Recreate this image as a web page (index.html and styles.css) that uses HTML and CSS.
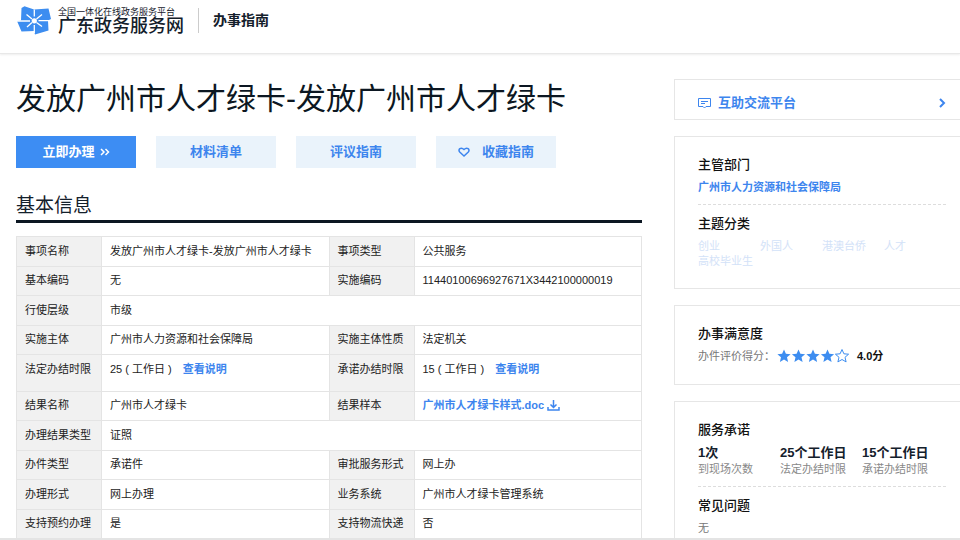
FILE: index.html
```html
<!DOCTYPE html>
<html lang="zh-CN">
<head>
<meta charset="utf-8">
<title>办事指南</title>
<link rel="stylesheet" href="styles.css">
</head>
<body>
<div class="page">
  <header class="topbar">
    <svg class="logo" viewBox="0 0 36 30" aria-hidden="true">
      <path fill="#3d8df0" d="M5.500 2 8.500 .3 18 3.500 32.500 2.500 35 13 32 14.500 32.500 24.500 19 28.500 18 25 5.500 25.500 1 15 5 14.500z"/>
      <path stroke="#fff" stroke-width="1.300" fill="none" d="M18.300 3.500V10.500M18.300 19V27M1 15H14M22.500 14.700H34M10.500 8.500 16 13M26 8.500 20.500 13M26 20.500 20.500 16.500M11 21 16 16.500"/>
      <circle cx="18.300" cy="14.800" r="2.600" fill="#fff"/>
    </svg>
    <div class="brand">
      <span class="brand-sub">全国一体化在线政务服务平台</span>
      <span class="brand-name">广东政务服务网</span>
    </div>
    <span class="section-name">办事指南</span>
  </header>
  <div class="content">
    <main>
      <h1>发放广州市人才绿卡-发放广州市人才绿卡</h1>
      <div class="actions">
        <button class="btn primary" type="button">立即办理
          <svg class="chevrons" viewBox="0 0 10 8" aria-hidden="true"><path d="M1 1l3 3-3 3M5.500 1l3 3-3 3"/></svg>
        </button>
        <button class="btn" type="button">材料清单</button>
        <button class="btn" type="button">评议指南</button>
        <button class="btn favorite" type="button">
          <svg class="heart" viewBox="0 0 12 10" aria-hidden="true"><path d="M6 9 1.700 5C-.5 2.500 3 -.5 6 2.500 9 -.5 12.500 2.500 10.300 5z"/></svg>
          收藏指南</button>
      </div>
      <h2>基本信息</h2>
      <table class="info">
        <colgroup><col class="c-label"><col class="c-value"><col class="c-label"><col class="c-value"></colgroup>
        <tbody>
        <tr><th scope="row">事项名称</th><td>发放广州市人才绿卡-发放广州市人才绿卡</td><th scope="row">事项类型</th><td>公共服务</td></tr>
        <tr><th scope="row">基本编码</th><td>无</td><th scope="row">实施编码</th><td>11440100696927671X3442100000019</td></tr>
        <tr><th scope="row">行使层级</th><td colspan="3">市级</td></tr>
        <tr><th scope="row">实施主体</th><td>广州市人力资源和社会保障局</td><th scope="row">实施主体性质</th><td>法定机关</td></tr>
        <tr class="tall"><th scope="row">法定办结时限</th><td>25 ( 工作日 ) <a class="explain" href="#">查看说明</a></td><th scope="row">承诺办结时限</th><td>15 ( 工作日 ) <a class="explain" href="#">查看说明</a></td></tr>
        <tr><th scope="row">结果名称</th><td>广州市人才绿卡</td><th scope="row">结果样本</th><td><a href="#">广州市人才绿卡样式.doc <svg class="download" viewBox="0 0 13 11" aria-hidden="true"><path d="M6.500 0V7M3.500 4.500l3 3 3-3M1 7v3h11V7"/></svg></a></td></tr>
        <tr><th scope="row">办理结果类型</th><td colspan="3">证照</td></tr>
        <tr><th scope="row">办件类型</th><td>承诺件</td><th scope="row">审批服务形式</th><td>网上办</td></tr>
        <tr><th scope="row">办理形式</th><td>网上办理</td><th scope="row">业务系统</th><td>广州市人才绿卡管理系统</td></tr>
        <tr><th scope="row">支持预约办理</th><td>是</td><th scope="row">支持物流快递</th><td>否</td></tr>
        </tbody>
      </table>
    </main>
    <aside>
      <a class="card forum" href="#">
        <svg class="chat" viewBox="0 0 13 11" aria-hidden="true"><path d="M.5.500h12v8H8L6.500 10 5 8.500H.5zM3 3.500h7M3 5.500h4"/></svg>
        <span>互助交流平台</span>
        <svg class="arrow" viewBox="0 0 8 10" aria-hidden="true"><path d="M2 1l4 4-4 4"/></svg>
      </a>
      <section class="card">
        <h3>主管部门</h3>
        <a class="dept" href="#">广州市人力资源和社会保障局</a>
        <hr>
        <h3>主题分类</h3>
        <ul class="tags"><li>创业</li><li>外国人</li><li>港澳台侨</li><li>人才</li><li>高校毕业生</li></ul>
      </section>
      <section class="card rating">
        <h3>办事满意度</h3>
        <p class="score"><span>办件评价得分：</span>
          <svg class="stars" viewBox="0 0 72 14" role="img" aria-label="4.0">
            <defs><path id="star" d="M7 .5 8.900 4.800 13.600 5.200 10 8.300 11.100 12.900 7 10.500 2.900 12.900 4 8.300.4 5.200 5.100 4.800z"/></defs>
            <g fill="#3d8df0"><use href="#star"/><use href="#star" x="14.500"/><use href="#star" x="29"/><use href="#star" x="43.500"/></g>
            <use href="#star" x="58" fill="#fff" stroke="#3d8df0"/>
          </svg>
          <strong>4.0分</strong></p>
      </section>
      <section class="card">
        <h3>服务承诺</h3>
        <dl class="promises">
          <div><dd>1次</dd><dt>到现场次数</dt></div>
          <div><dd>25个工作日</dd><dt>法定办结时限</dt></div>
          <div><dd>15个工作日</dd><dt>承诺办结时限</dt></div>
        </dl>
        <hr>
        <h3>常见问题</h3>
        <p class="muted">无</p>
      </section>
    </aside>
  </div>
</div>
</body>
</html>
```
FILE: styles.css
```css
* { box-sizing: border-box; }
body, h1, h2, h3, p, ul, dl, dd { margin: 0; padding: 0; }
body {
  background: #fff;
  color: #222;
  font: 11px/16px "Liberation Sans", "Noto Sans CJK SC", sans-serif;
}
a { color: #3d85ee; font-weight: 700; text-decoration: none; }
svg { fill: none; stroke: currentColor; flex: none; }

.page {
  display: flex;
  flex-direction: column;
  height: 100vh;
  overflow: hidden;
  border-bottom: 2px solid #e4e4e4;
}

.topbar {
  display: flex;
  flex: none;
  align-items: flex-start;
  height: 54px;
  padding: 6px 16px 0;
  border-bottom: 1px solid #e8e8e8;
  box-shadow: 0 1px 2px #eee;
}
.logo { width: 36px; height: 30px; stroke: none; }
.brand { display: flex; flex-direction: column; margin-left: 6px; color: #14202b; }
.brand-sub { font-size: 9px; line-height: 13px; }
.brand-name { font-size: 18px; font-weight: 500; line-height: 15px; }
.section-name {
  margin: 2px 0 0 14px;
  padding-left: 14px;
  border-left: 1px solid #ccc;
  color: #14202b;
  font-size: 14px;
  font-weight: 700;
  line-height: 25px;
}

.content {
  display: grid;
  grid-template-columns: minmax(0, 1fr) 286px;
  gap: 32px;
  padding: 25px 0 0 16px;
}
h1 { color: #0c1722; font-size: 30px; font-weight: 400; line-height: 40px; }

.actions { display: grid; grid-template-columns: repeat(4, 120px); gap: 20px; margin-top: 17px; }
.btn {
  display: flex;
  align-items: center;
  justify-content: center;
  gap: 5px;
  height: 32px;
  padding: 0;
  border: 0;
  background: #eaf3fb;
  color: #3d85ee;
  font: inherit;
  font-size: 13px;
  font-weight: 700;
}
.btn.primary { background: #3d8df3; color: #fff; }
.btn.favorite { gap: 12px; }
.chevrons { width: 10px; height: 8px; stroke-width: 1.5; }
.heart { width: 12px; height: 10px; stroke-width: 1.5; }

h2 {
  margin-top: 23px;
  border-bottom: 3px solid #0c1722;
  color: #14202b;
  font-size: 19px;
  font-weight: 400;
  line-height: 29px;
}

.info { width: 100%; margin-top: 13px; border-collapse: collapse; table-layout: fixed; }
.c-label { width: 85px; }
.info tr { height: 30px; }
.info tr:nth-child(even) { height: 29px; }
.info .tall { height: 37px; }
.info th, .info td { padding: 0 8px 2px; border: 1px solid #e4e4e4; text-align: left; white-space: nowrap; }
.info th { background: #f1f1f1; font-weight: 400; }
.info .tall th, .info .tall td { padding-bottom: 8px; }
.explain { margin-left: 8px; }
.download { width: 13px; height: 11px; stroke-width: 1.5; vertical-align: -2px; }

aside { display: flex; flex-direction: column; gap: 16px; }
.card { display: block; padding: 18px 14px 19px 23px; border: 1px solid #e6e6e6; border-right: 0; }
.card.forum { display: flex; align-items: center; gap: 7px; padding: 11px 14px 4px 23px; font-size: 13px; line-height: 24px; }
.card.rating { padding-bottom: 20px; }
.chat { width: 13px; height: 11px; }
.arrow { width: 8px; height: 10px; margin-left: auto; stroke-width: 2; }
h3 { color: #111; font-size: 13px; font-weight: 500; line-height: 20px; }
.dept { display: block; margin-top: 4px; }
hr { margin: 9px 0; border: 0; border-top: 1px dashed #ddd; }
.tags {
  display: grid;
  grid-template-columns: repeat(4, 62px);
  margin-top: 5px;
  color: #d3e2f8;
  line-height: 15px;
  list-style: none;
  white-space: nowrap;
}
.score { display: flex; align-items: center; margin-top: 4px; color: #777; }
.stars { width: 72px; height: 14px; stroke: none; margin-left: 2px; }
.score strong { margin-left: 8px; color: #111; }
.promises { display: grid; grid-template-columns: repeat(3, 82px); margin-top: 5px; color: #888; white-space: nowrap; }
.promises dd { color: #14202b; font-size: 13px; font-weight: 700; }
.muted { margin-top: 4px; color: #777; }
```
